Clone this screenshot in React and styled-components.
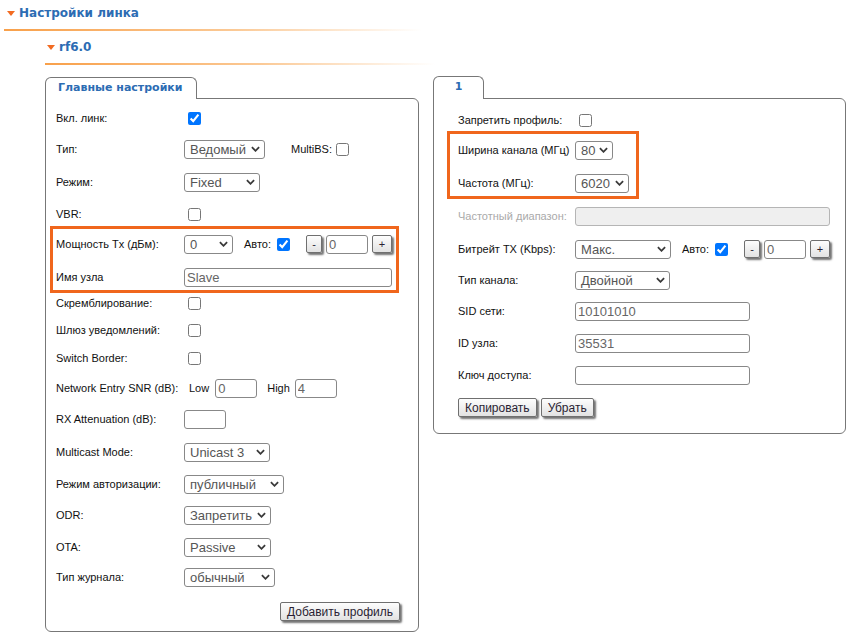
import styled, { createGlobalStyle } from "styled-components";

const GlobalStyle = createGlobalStyle`
  body {
    margin: 0;
    background: #fff;
    font-family: "Liberation Sans", Arial, sans-serif;
    color: #111;
  }
`;

const Page = styled.div`
  width: 855px;
`;

const Heading = styled.div`
  display: flex;
  align-items: center;
  gap: 4px;
  margin: ${(p) => p.$mt}px 0 0 ${(p) => p.$ml}px;
  padding: 0 0 9px ${(p) => p.$pl}px;
  font: bold 12px/14px "DejaVu Sans", Verdana, sans-serif;
  color: #2c6cb3;
`;

const Triangle = styled.span`
  width: 0;
  height: 0;
  border-left: 4px solid transparent;
  border-right: 4px solid transparent;
  border-top: 5px solid #f26b21;
`;

const Rule = styled.div`
  height: 2px;
  margin-left: ${(p) => p.$ml}px;
  width: ${(p) => p.$w}px;
  background: linear-gradient(90deg, #f8a04a 0%, #fbc995 55%, rgba(255, 255, 255, 0) 100%);
`;

const Columns = styled.div`
  display: flex;
  align-items: flex-start;
  gap: 14px;
  margin: 11px 0 0 45px;
`;

const Panel = styled.div`
  width: ${(p) => p.$w}px;
  margin-top: ${(p) => p.$mt || 0}px;
`;

const Tab = styled.div`
  position: relative;
  z-index: 1;
  box-sizing: border-box;
  width: ${(p) => p.$w}px;
  height: ${(p) => p.$h}px;
  margin-bottom: -1px;
  padding-left: ${(p) => p.$pl || 0}px;
  text-align: ${(p) => (p.$center ? "center" : "left")};
  border: 1px solid #777;
  border-bottom: none;
  border-radius: 6px 6px 0 0;
  background: #fff;
  font: bold 11px/20px "DejaVu Sans", Verdana, sans-serif;
  color: #2c6cb3;
`;

const Body = styled.div`
  box-sizing: border-box;
  border: 1px solid #777;
  border-radius: 0 6px 6px 6px;
  padding: 0 10px ${(p) => p.$pb}px ${(p) => p.$pl}px;
  display: flow-root;
`;

const Row = styled.div`
  display: grid;
  grid-template-columns: ${(p) => p.$lw}px auto;
  align-items: center;
  height: 20px;
  margin-top: ${(p) => p.$mt}px;
  font-size: 11px;
`;

const Label = styled.span`
  color: ${(p) => (p.$muted ? "#aaa" : "#111")};
  white-space: nowrap;
`;

const Controls = styled.div`
  display: flex;
  align-items: center;
`;

const Highlight = styled.div`
  box-sizing: border-box;
  width: ${(p) => p.$w}px;
  margin: ${(p) => p.$mt}px 0 0 -${(p) => p.$ml}px;
  padding: 0 0 3px ${(p) => p.$ml - 3}px;
  border: 3px solid #f0661c;
  display: flow-root;
`;

const SelectBox = styled.div`
  box-sizing: border-box;
  display: flex;
  align-items: center;
  justify-content: space-between;
  width: ${(p) => p.$w}px;
  height: 19px;
  padding: 0 4px 0 5px;
  border: 1px solid #888;
  border-radius: 3px;
  background: #fff;
  font-size: 13px;
  color: #555;
  white-space: nowrap;
  margin-left: ${(p) => p.$ml || 0}px;
`;

const Chevron = () => (
  <svg width="9" height="6" viewBox="0 0 10 6">
    <path d="M1 1 L5 5 L9 1" fill="none" stroke="#3a3a3a" strokeWidth="2" />
  </svg>
);

const Select = ({ w, value, ml }) => (
  <SelectBox $w={w} $ml={ml}>
    <span>{value}</span>
    <Chevron />
  </SelectBox>
);

const TextInput = styled.input`
  box-sizing: border-box;
  width: ${(p) => p.$w}px;
  height: 19px;
  margin: 0 0 0 ${(p) => p.$ml || 0}px;
  padding: 0 2px;
  border: 1px solid ${(p) => (p.disabled ? "#b5b5b5" : "#888")};
  border-radius: 3px;
  background: ${(p) => (p.disabled ? "#efefef" : "#fff")};
  font-family: "Liberation Sans", Arial, sans-serif;
  font-size: 13px;
  color: #666;
  outline: none;
`;

const Check = styled.input.attrs({ type: "checkbox" })`
  width: 13px;
  height: 13px;
  margin: 0 0 0 ${(p) => (p.$ml === undefined ? 4 : p.$ml)}px;
`;

const Inline = styled.span`
  margin-left: ${(p) => p.$ml}px;
  font-size: 11px;
  color: #111;
`;

const Button = styled.button`
  box-sizing: border-box;
  height: ${(p) => p.$h || 19}px;
  width: ${(p) => (p.$w ? `${p.$w}px` : "auto")};
  margin-left: ${(p) => p.$ml || 0}px;
  padding: 0 ${(p) => (p.$w ? 0 : 6)}px;
  border: 1px solid #6f6f6f;
  border-radius: 2px;
  background: linear-gradient(#fdfdfd, #e2e2e2);
  box-shadow: 2px 2px 2px rgba(0, 0, 0, 0.55);
  font-family: "Liberation Sans", Arial, sans-serif;
  font-size: ${(p) => p.$fs || 12}px;
  line-height: 1;
  color: #2a1f33;
`;

const ButtonRow = styled.div`
  display: flex;
  justify-content: ${(p) => (p.$right ? "flex-end" : "flex-start")};
  gap: 4px;
  margin-top: ${(p) => p.$mt}px;
  padding-right: ${(p) => p.$pr || 0}px;
`;

const TxPower = ({ selW, selValue }) => (
  <Controls>
    <Select w={selW} value={selValue} />
    <Inline $ml={11}>Авто:</Inline>
    <Check defaultChecked $ml={6} />
    <Button $w={16} $h={18} $fs={11} $ml={16}>-</Button>
    <TextInput $w={42} $ml={4} defaultValue="0" readOnly />
    <Button $w={20} $h={18} $fs={11} $ml={4}>+</Button>
  </Controls>
);

export default function App() {
  return (
    <Page>
      <GlobalStyle />
      <Heading $mt={6} $ml={0} $pl={7}>
        <Triangle />
        Настройки линка
      </Heading>
      <Rule $ml={4} $w={418} />
      <Heading $mt={9} $ml={45} $pl={2}>
        <Triangle />
        rf6.0
      </Heading>
      <Rule $ml={45} $w={390} />

      <Columns>
        <Panel $w={374} $mt={1}>
          <Tab $w={152} $h={22} $pl={12}>Главные настройки</Tab>
          <Body $pl={10} $pb={10}>
            <Row $lw={128} $mt={9}>
              <Label>Вкл. линк:</Label>
              <Controls><Check defaultChecked /></Controls>
            </Row>
            <Row $lw={128} $mt={11}>
              <Label>Тип:</Label>
              <Controls>
                <Select w={81} value="Ведомый" />
                <Inline $ml={26}>MultiBS:</Inline>
                <Check />
              </Controls>
            </Row>
            <Row $lw={128} $mt={13}>
              <Label>Режим:</Label>
              <Controls><Select w={76} value="Fixed" /></Controls>
            </Row>
            <Row $lw={128} $mt={12}>
              <Label>VBR:</Label>
              <Controls><Check /></Controls>
            </Row>
            <Highlight $w={349} $mt={2} $ml={6}>
              <Row $lw={128} $mt={5}>
                <Label>Мощность Tx (дБм):</Label>
                <TxPower selW={49} selValue="0" />
              </Row>
              <Row $lw={128} $mt={13}>
                <Label>Имя узла</Label>
                <Controls><TextInput $w={208} defaultValue="Slave" readOnly /></Controls>
              </Row>
            </Highlight>
            <Row $lw={128} $mt={0}>
              <Label>Скремблирование:</Label>
              <Controls><Check /></Controls>
            </Row>
            <Row $lw={128} $mt={7}>
              <Label>Шлюз уведомлений:</Label>
              <Controls><Check /></Controls>
            </Row>
            <Row $lw={128} $mt={8}>
              <Label>Switch Border:</Label>
              <Controls><Check /></Controls>
            </Row>
            <Row $lw={128} $mt={10}>
              <Label>Network Entry SNR (dB):</Label>
              <Controls>
                <Inline $ml={5}>Low</Inline>
                <TextInput $w={42} $ml={6} defaultValue="0" readOnly />
                <Inline $ml={10}>High</Inline>
                <TextInput $w={42} $ml={5} defaultValue="4" readOnly />
              </Controls>
            </Row>
            <Row $lw={128} $mt={11}>
              <Label>RX Attenuation (dB):</Label>
              <Controls><TextInput $w={42} defaultValue="" readOnly /></Controls>
            </Row>
            <Row $lw={128} $mt={13}>
              <Label>Multicast Mode:</Label>
              <Controls><Select w={86} value="Unicast 3" /></Controls>
            </Row>
            <Row $lw={128} $mt={12}>
              <Label>Режим авторизации:</Label>
              <Controls><Select w={100} value="публичный" /></Controls>
            </Row>
            <Row $lw={128} $mt={11}>
              <Label>ODR:</Label>
              <Controls><Select w={87} value="Запретить" /></Controls>
            </Row>
            <Row $lw={128} $mt={12}>
              <Label>OTA:</Label>
              <Controls><Select w={87} value="Passive" /></Controls>
            </Row>
            <Row $lw={128} $mt={10}>
              <Label>Тип журнала:</Label>
              <Controls><Select w={91} value="обычный" /></Controls>
            </Row>
            <ButtonRow $right $mt={15} $pr={8}>
              <Button>Добавить профиль</Button>
            </ButtonRow>
          </Body>
        </Panel>

        <Panel $w={413}>
          <Tab $w={51} $h={23} $center>1</Tab>
          <Body $pl={24} $pb={16}>
            <Row $lw={117} $mt={11}>
              <Label>Запретить профиль:</Label>
              <Controls><Check /></Controls>
            </Row>
            <Highlight $w={192} $mt={1} $ml={11}>
              <Row $lw={117} $mt={6}>
                <Label>Ширина канала (МГц)</Label>
                <Controls><Select w={38} value="80" /></Controls>
              </Row>
              <Row $lw={117} $mt={13}>
                <Label>Частота (МГц):</Label>
                <Controls><Select w={54} value="6020" /></Controls>
              </Row>
            </Highlight>
            <Row $lw={117} $mt={7}>
              <Label $muted>Частотный диапазон:</Label>
              <Controls><TextInput $w={255} disabled defaultValue="" /></Controls>
            </Row>
            <Row $lw={117} $mt={13}>
              <Label>Битрейт TX (Kbps):</Label>
              <TxPower selW={96} selValue="Макс." />
            </Row>
            <Row $lw={117} $mt={11}>
              <Label>Тип канала:</Label>
              <Controls><Select w={95} value="Двойной" /></Controls>
            </Row>
            <Row $lw={117} $mt={11}>
              <Label>SID сети:</Label>
              <Controls><TextInput $w={175} defaultValue="10101010" readOnly /></Controls>
            </Row>
            <Row $lw={117} $mt={12}>
              <Label>ID узла:</Label>
              <Controls><TextInput $w={175} defaultValue="35531" readOnly /></Controls>
            </Row>
            <Row $lw={117} $mt={12}>
              <Label>Ключ доступа:</Label>
              <Controls><TextInput $w={175} defaultValue="" readOnly /></Controls>
            </Row>
            <ButtonRow $mt={13}>
              <Button>Копировать</Button>
              <Button>Убрать</Button>
            </ButtonRow>
          </Body>
        </Panel>
      </Columns>
    </Page>
  );
}
